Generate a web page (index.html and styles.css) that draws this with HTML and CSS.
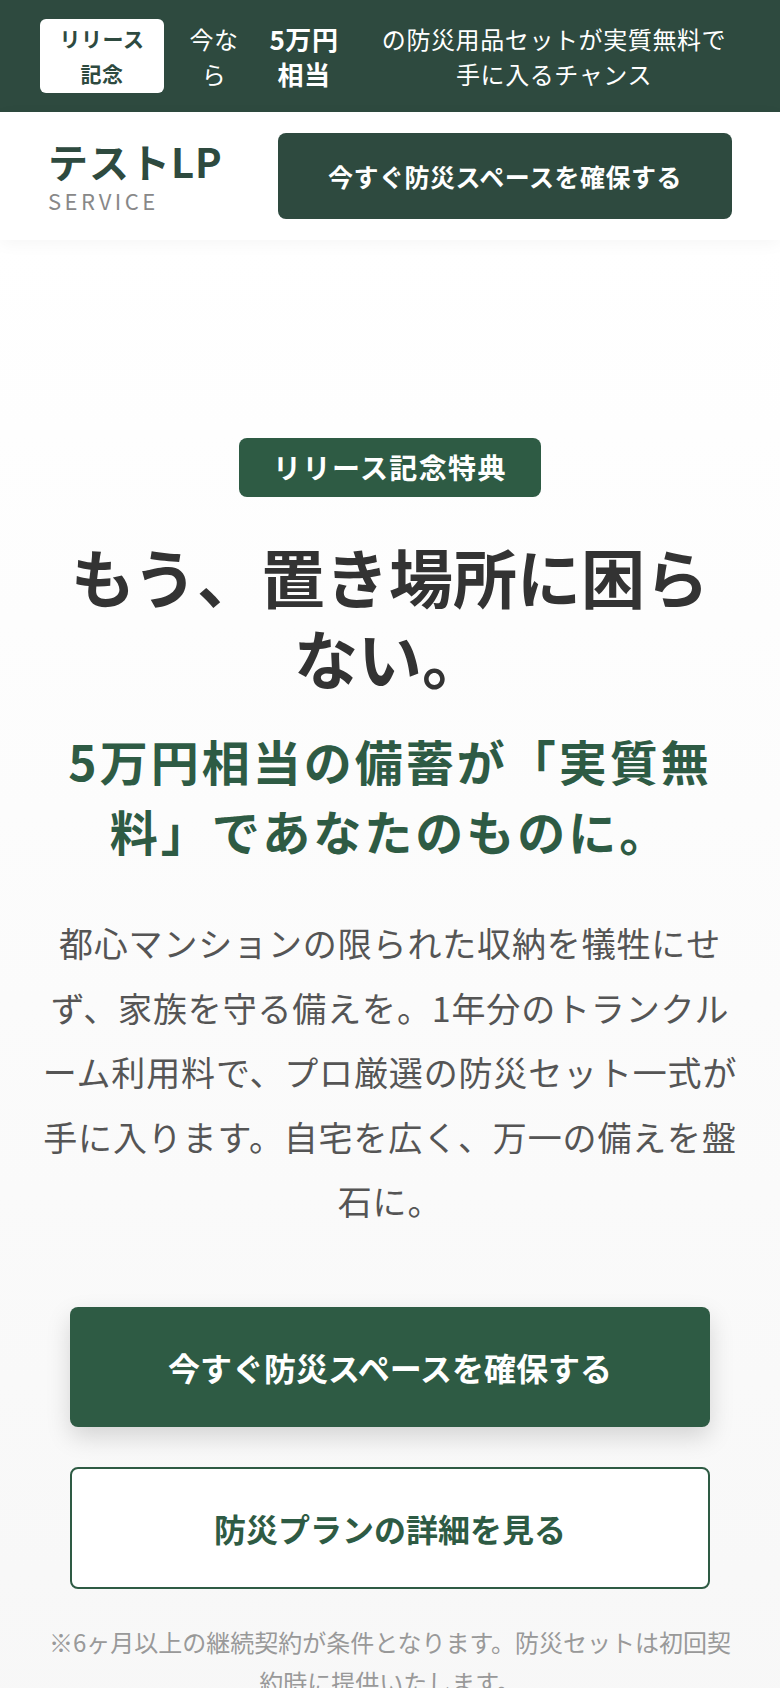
FILE: index.html
```html
<!DOCTYPE html>
<html lang="ja">
<head>
<meta charset="utf-8">
<title>テストLP</title>
<link rel="stylesheet" href="styles.css">
</head>
<body>
<div class="promo">
  <span class="promo-badge">リリース記念</span>
  <span class="promo-now">今なら</span>
  <strong class="promo-amount">5万円相当</strong>
  <span class="promo-text">の防災用品セットが実質無料で手に入るチャンス</span>
</div>
<header class="site-header">
  <div class="logo">
    <div class="logo-title">テストLP</div>
    <div class="logo-sub">SERVICE</div>
  </div>
  <a class="header-cta" href="#">今すぐ防災スペースを確保する</a>
</header>
<main class="hero">
  <span class="hero-badge">リリース記念特典</span>
  <h1 class="hero-title">もう、置き場所に困らない。</h1>
  <p class="hero-sub">5万円相当の備蓄が「実質無料」であなたのものに。</p>
  <p class="hero-lead">都心マンションの限られた収納を犠牲にせず、家族を守る備えを。1年分のトランクルーム利用料で、プロ厳選の防災セット一式が手に入ります。自宅を広く、万一の備えを盤石に。</p>
  <div class="hero-actions">
    <a class="btn btn-primary" href="#">今すぐ防災スペースを確保する</a>
    <a class="btn btn-secondary" href="#">防災プランの詳細を見る</a>
  </div>
  <p class="note">※6ヶ月以上の継続契約が条件となります。防災セットは初回契約時に提供いたします。</p>
</main>
</body>
</html>
```
FILE: styles.css
```css
body {
  margin: 0;
  font-family: "Noto Sans CJK JP", "Noto Sans", sans-serif;
  background: #f8f8f8;
}

.promo {
  background: #2e4a3f;
  color: #fff;
  height: 112px;
  box-sizing: border-box;
  padding: 0 48px 0 40px;
  display: flex;
  align-items: center;
  gap: 24px;
  font-size: 24px;
  line-height: 35px;
  letter-spacing: 0.025em;
  text-align: center;
}

.promo-badge {
  flex: 0 0 124px;
  box-sizing: border-box;
  padding: 2px 18px;
  background: #fff;
  color: #2e4a3f;
  border-radius: 6px;
  font-size: 21px;
  font-weight: 700;
  letter-spacing: 0.5px;
}

.promo-now {
  flex: 0 0 52px;
}

.promo-amount {
  flex: 0 0 80px;
  font-size: 26px;
  font-weight: 700;
}

.promo-text {
  flex: 0 0 356px;
  margin-left: 8px;
}

.site-header {
  position: relative;
  z-index: 1;
  background: #fff;
  height: 128px;
  box-sizing: border-box;
  padding: 0 48px;
  display: flex;
  align-items: center;
  justify-content: space-between;
  box-shadow: 0 4px 16px rgba(0, 0, 0, 0.04);
}

.logo-title {
  font-size: 40px;
  font-weight: 700;
  color: #2e4a3f;
  line-height: 48px;
  letter-spacing: 1px;
}

.logo-sub {
  font-size: 22px;
  color: #888;
  letter-spacing: 3.5px;
  line-height: 31px;
}

.header-cta {
  height: 86px;
  box-sizing: border-box;
  padding: 0 50px;
  display: flex;
  align-items: center;
  background: #2e4a3f;
  color: #fff;
  border-radius: 8px;
  font-size: 25px;
  font-weight: 700;
  letter-spacing: 0.02em;
  text-decoration: none;
}

.hero {
  display: block;
  background: linear-gradient(#ffffff, #f7f7f7);
  padding: 198px 40px 60px;
  text-align: center;
}

.hero-badge {
  display: inline-block;
  background: #2e5b44;
  color: #fff;
  font-size: 28px;
  font-weight: 700;
  letter-spacing: 0.05em;
  line-height: 43px;
  padding: 8px 34px;
  border-radius: 8px;
}

.hero-title {
  margin: 38px 0 0;
  font-size: 64px;
  font-weight: 700;
  color: #333;
  line-height: 81px;
}

.hero-sub {
  margin: 28px 0 0;
  font-size: 48px;
  font-weight: 700;
  color: #2e5b44;
  letter-spacing: 3px;
  line-height: 70px;
}

.hero-lead {
  margin: 46px 0 0;
  font-size: 34px;
  color: #555;
  letter-spacing: 0.85px;
  line-height: 64.5px;
}

.hero-actions {
  margin: 73px auto 0;
  max-width: 640px;
  display: flex;
  flex-direction: column;
  gap: 40px;
}

.btn {
  height: 120px;
  box-sizing: border-box;
  display: flex;
  align-items: center;
  justify-content: center;
  border-radius: 8px;
  font-size: 32px;
  font-weight: 700;
  text-decoration: none;
}

.btn-primary {
  background: #2e5b44;
  color: #fff;
  box-shadow: 0 10px 24px rgba(0, 0, 0, 0.15);
}

.btn-secondary {
  height: 122px;
  background: #fff;
  color: #2e5b44;
  border: 2px solid #2e5b44;
}

.note {
  margin: 33px 0 0;
  font-size: 24px;
  color: #999;
  line-height: 40px;
}
```
